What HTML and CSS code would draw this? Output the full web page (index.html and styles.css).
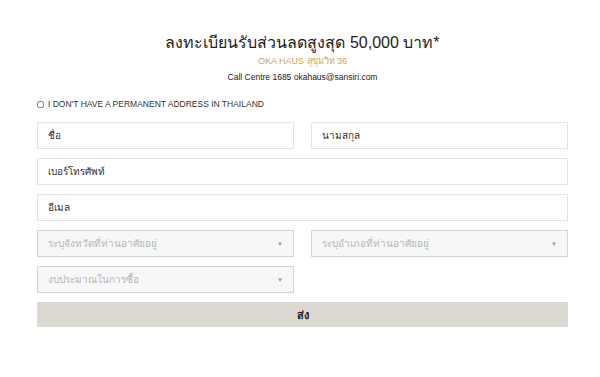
FILE: index.html
```html
<!DOCTYPE html>
<html lang="th">
<head>
  <meta charset="UTF-8">
  <title>ลงทะเบียนรับส่วนลด</title>
  <link rel="stylesheet" href="styles.css">
</head>
<body>
  <form class="reg-form">
    <div class="head">
      <h2>ลงทะเบียนรับส่วนลดสูงสุด 50,000 บาท*</h2>
      <p class="project">OKA HAUS สุขุมวิท 36</p>
      <p class="contact">Call Centre 1685 okahaus@sansiri.com</p>
    </div>

    <label class="check">
      <input type="checkbox"> I DON'T HAVE A PERMANENT ADDRESS IN THAILAND
    </label>

    <div class="row two">
      <input type="text" placeholder="ชื่อ">
      <input type="text" placeholder="นามสกุล">
    </div>
    <div class="row">
      <input type="text" placeholder="เบอร์โทรศัพท์">
    </div>
    <div class="row">
      <input type="text" placeholder="อีเมล">
    </div>
    <div class="row two">
      <div class="select">ระบุจังหวัดที่ท่านอาศัยอยู่<span class="arrow">▼</span></div>
      <div class="select">ระบุอำเภอที่ท่านอาศัยอยู่<span class="arrow">▼</span></div>
    </div>
    <div class="row two">
      <div class="select">งบประมาณในการซื้อ<span class="arrow">▼</span></div>
    </div>

    <button type="submit">ส่ง</button>
  </form>
</body>
</html>
```

FILE: styles.css
```css
body {
  margin: 0;
  background: #fff;
  font-family: "Liberation Sans", "Noto Sans", sans-serif;
  color: #333;
}
.reg-form {
  width: 531px;
  margin: 0 0 0 37px;
  padding-top: 32px;
}
.head {
  text-align: center;
}
.head h2 {
  margin: 0;
  font-size: 16px;
  font-weight: normal;
  color: #222;
  line-height: 22px;
}
.project {
  margin: 1px 0 0;
  font-size: 9px;
  color: #c8a766;
  line-height: 12px;
}
.contact {
  margin: 4px 0 0;
  font-size: 8.5px;
  color: #222;
  line-height: 12px;
}
.check {
  display: flex;
  align-items: center;
  margin: 15px 0 12px;
  font-size: 8.5px;
  color: #333;
  height: 12px;
}
.check input {
  width: 7px;
  height: 7px;
  margin: 0 4px 0 0;
}
.row {
  display: flex;
  gap: 17px;
  margin-bottom: 9px;
}
.row input, .select {
  flex: 1;
  box-sizing: border-box;
  height: 27px;
  border: 1px solid #e3e3e3;
  padding: 0 10px;
  font-family: inherit;
  font-size: 10px;
  outline: none;
}
.two > * {
  flex: 0 0 257px;
}
.row input::placeholder {
  color: #333;
}
.select {
  display: flex;
  align-items: center;
  justify-content: space-between;
  background: #f7f7f7;
  border-color: #d4d4d4;
  color: #b5b5b5;
}
.arrow {
  font-size: 6px;
  color: #999;
}
button {
  display: block;
  width: 100%;
  height: 25px;
  border: none;
  background: #dcd8d2;
  color: #222;
  font-weight: bold;
  font-size: 11px;
  font-family: inherit;
}
```
